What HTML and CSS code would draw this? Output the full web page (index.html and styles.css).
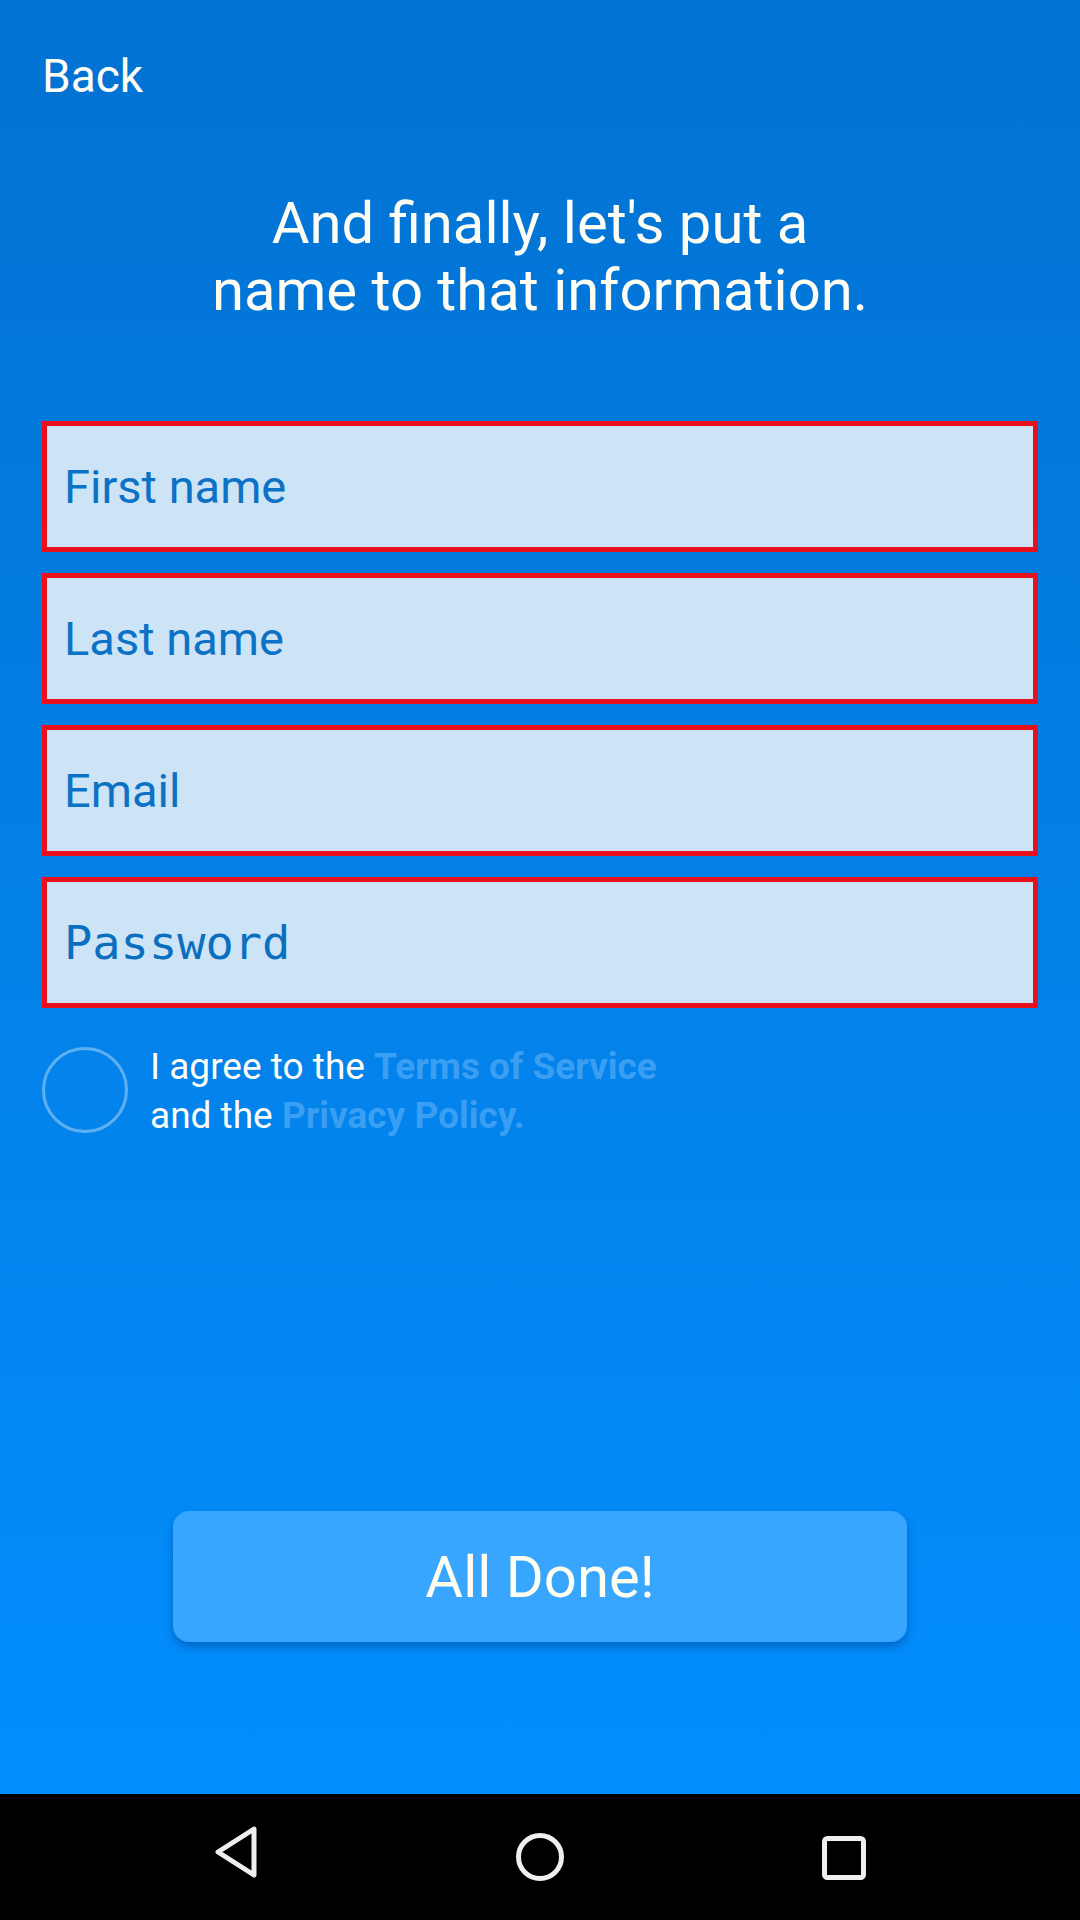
FILE: index.html
```html
<!DOCTYPE html>
<html>
<head>
<meta charset="utf-8">
<link rel="stylesheet" href="styles.css">
</head>
<body>
<div class="screen">
  <div class="back">Back</div>
  <h1 class="title">And finally, let's put a<br>name to that information.</h1>
  <div class="fields">
    <div class="field"><span class="ph">First name</span></div>
    <div class="field"><span class="ph">Last name</span></div>
    <div class="field"><span class="ph">Email</span></div>
    <div class="field"><span class="ph mono">Password</span></div>
  </div>
  <div class="agree">
    <div class="check"></div>
    <div class="agree-text">I agree to the <span class="link">Terms of Service</span><br>and the <span class="link">Privacy Policy.</span></div>
  </div>
  <div class="button">All Done!</div>
</div>
<div class="navbar">
  <svg class="nav-icon" width="46" height="54" viewBox="0 0 46 54"><path d="M40 4 L4 27 L40 50 Z" fill="none" stroke="#efefef" stroke-width="5" stroke-linejoin="round"/></svg>
  <svg class="nav-icon" width="50" height="50" viewBox="0 0 50 50"><circle cx="25" cy="25" r="21.5" fill="none" stroke="#efefef" stroke-width="5"/></svg>
  <svg class="nav-icon" width="46" height="46" viewBox="0 0 46 46"><rect x="3.5" y="3.5" width="39" height="39" rx="3" fill="none" stroke="#efefef" stroke-width="5"/></svg>
</div>
</body>
</html>
```
FILE: styles.css
```css
html, body {
  margin: 0;
  padding: 0;
}
body {
  width: 1080px;
  height: 1920px;
  display: flex;
  flex-direction: column;
  font-family: Roboto, "Liberation Sans", sans-serif;
  overflow: hidden;
}
.screen {
  height: 1794px;
  box-sizing: border-box;
  padding: 0 42px;
  display: flex;
  flex-direction: column;
  background: linear-gradient(180deg, #0272d2 0%, #0380e6 50%, #028efe 100%);
}
.back {
  margin-top: 49px;
  font-size: 46px;
  line-height: 54px;
  color: #fdfdf6;
}
.title {
  margin: 87px 0 0;
  font-size: 58px;
  line-height: 67px;
  font-weight: 400;
  text-align: center;
  color: #fdfdf4;
}
.fields {
  margin-top: 97px;
  display: flex;
  flex-direction: column;
  gap: 21px;
}
.field {
  height: 131px;
  box-sizing: border-box;
  border: 5px solid #e8101c;
  background: #cde3f6;
  display: flex;
  align-items: center;
  padding-left: 17px;
}
.ph {
  font-size: 47px;
  color: #0b72c5;
}
.ph.mono {
  font-family: "DejaVu Sans Mono", "Liberation Mono", monospace;
  font-size: 47px;
  color: #0b6fc0;
}
.agree {
  margin-top: 34px;
  display: flex;
  align-items: flex-start;
  gap: 22px;
}
.check {
  width: 86px;
  height: 86px;
  margin-top: 5px;
  box-sizing: border-box;
  border: 3px solid #5eb0f2;
  border-radius: 50%;
  flex: none;
}
.agree-text {
  font-size: 37px;
  line-height: 49px;
  color: #fdfdf6;
}
.link {
  font-weight: 700;
  color: #3a9ff3;
}
.button {
  margin: auto 131px 152px;
  height: 131px;
  border-radius: 16px;
  background: #38a6ff;
  box-shadow: 0 5px 8px rgba(0, 40, 110, 0.35);
  display: flex;
  align-items: center;
  justify-content: center;
  font-size: 58px;
  color: #fdfdf0;
}
.navbar {
  height: 126px;
  background: #000;
  position: relative;
}
.nav-icon {
  position: absolute;
  top: 39px;
}
.nav-icon:nth-child(1) { left: 214px; top: 31px; }
.nav-icon:nth-child(2) { left: 515px; top: 38px; }
.nav-icon:nth-child(3) { left: 821px; top: 41px; }
```
